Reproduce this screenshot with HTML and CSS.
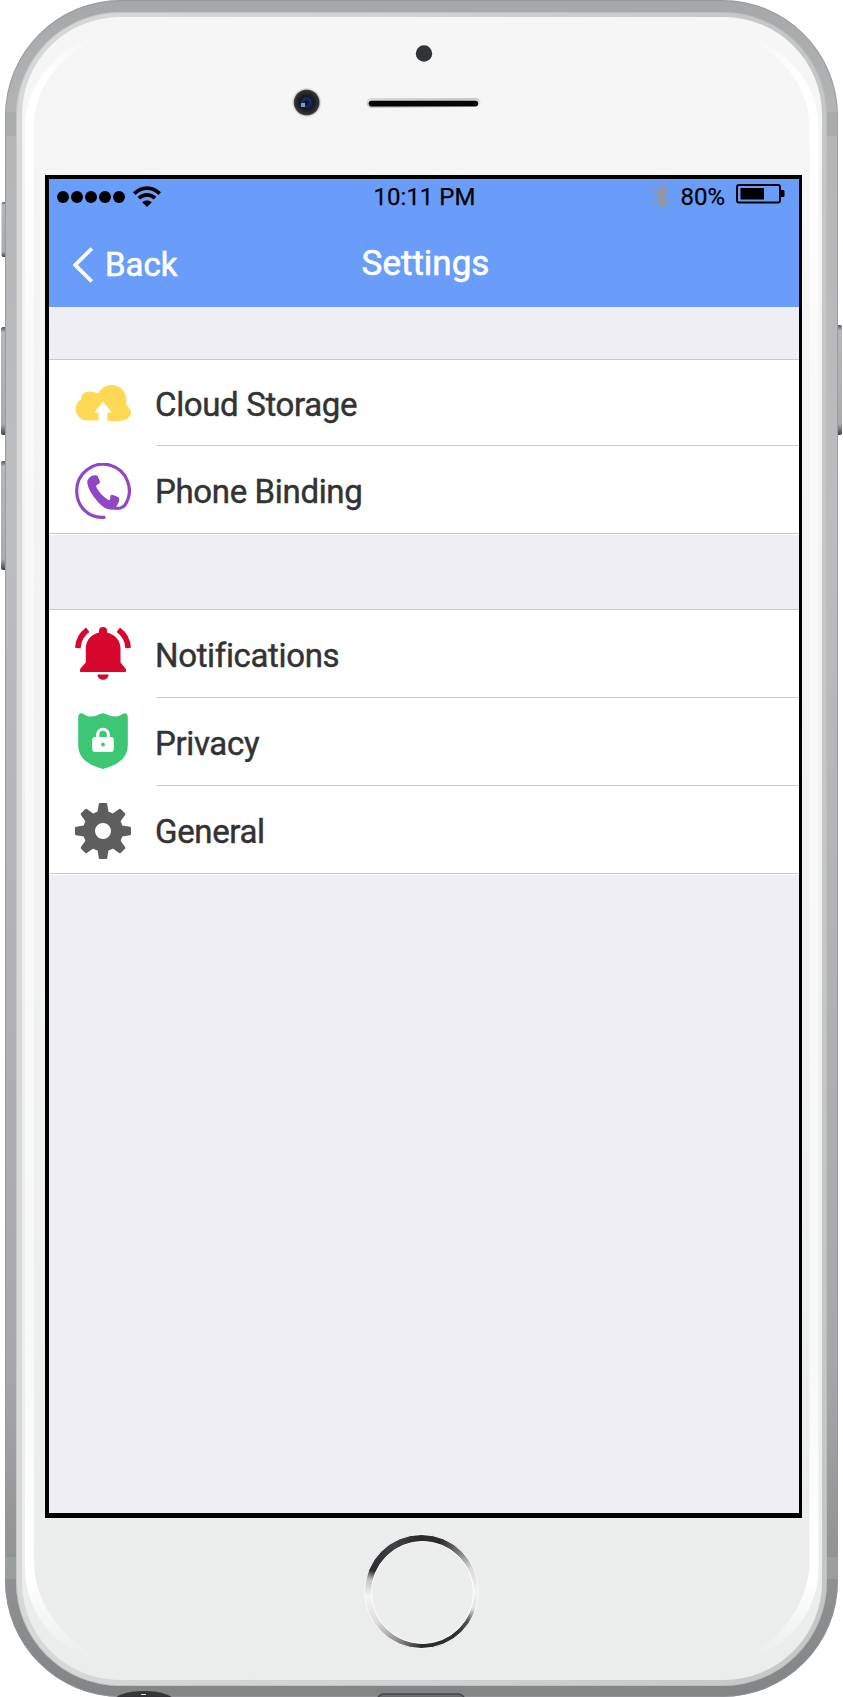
FILE: index.html
```html
<!DOCTYPE html>
<html lang="en">
<head>
<meta charset="utf-8">
<title>Settings</title>
<link rel="stylesheet" href="styles.css">
</head>
<body>
<div class="phone">
  <svg class="shell" viewBox="0 0 843 1697" width="843" height="1697" aria-hidden="true">
    <defs>
      <linearGradient id="metal" x1="0" y1="0" x2="0" y2="1">
        <stop offset="0" stop-color="#a5a7a9"/><stop offset=".07" stop-color="#b3b5b7"/><stop offset=".3" stop-color="#bbbdc0"/><stop offset=".8" stop-color="#a6a8ab"/><stop offset="1" stop-color="#828486"/>
      </linearGradient>
      <linearGradient id="rim" x1="0" y1="0" x2="1" y2="0">
        <stop offset="0" stop-color="#d6d9d7"/><stop offset=".5" stop-color="#cfd1d0"/><stop offset="1" stop-color="#c5c7c6"/>
      </linearGradient>
      <linearGradient id="face" x1="0" y1="0" x2="0" y2="1">
        <stop offset="0" stop-color="#f6f6f6"/><stop offset=".5" stop-color="#f1f1f1"/><stop offset="1" stop-color="#eaedec"/>
      </linearGradient>
      <linearGradient id="gloss" x1="0" y1="0" x2="0" y2="1">
        <stop offset="0" stop-color="#fff" stop-opacity="0"/><stop offset=".03" stop-color="#fff"/><stop offset=".14" stop-color="#fff" stop-opacity=".75"/><stop offset=".2" stop-color="#fff" stop-opacity=".5"/><stop offset=".8" stop-color="#fff" stop-opacity=".6"/><stop offset=".95" stop-color="#fff"/><stop offset="1" stop-color="#fff" stop-opacity="0"/>
      </linearGradient>
      <linearGradient id="key" x1="0" y1="0" x2="0" y2="1">
        <stop offset="0" stop-color="#55585b"/><stop offset=".05" stop-color="#b4b6b8"/><stop offset=".9" stop-color="#a9abad"/><stop offset="1" stop-color="#3f4144"/>
      </linearGradient>
      <radialGradient id="lens"><stop offset="0" stop-color="#070a16"/><stop offset=".3" stop-color="#183064"/><stop offset=".48" stop-color="#111a35"/><stop offset=".55" stop-color="#1c1c1e"/><stop offset=".9" stop-color="#303133"/><stop offset="1" stop-color="#59595b"/></radialGradient>
      <linearGradient id="slot" x1="0" y1="0" x2="1" y2="1"><stop offset="0" stop-color="#ddd"/><stop offset=".5" stop-color="#c8c8c8"/><stop offset="1" stop-color="#fff"/></linearGradient>
      <clipPath id="body"><rect x="5" y="0" width="833" height="1697" rx="116"/></clipPath>
    </defs>
    <rect x="1.500" y="202" width="8" height="55" rx="2" fill="url(#key)"/>
    <rect x="1" y="327" width="8" height="108" rx="2" fill="url(#key)"/>
    <rect x="1" y="461" width="8" height="109" rx="2" fill="url(#key)"/>
    <rect x="834" y="325" width="8" height="110" rx="2" fill="url(#key)"/>
    <rect x="5" y="0" width="833" height="1697" rx="116" fill="url(#metal)"/>
    <g clip-path="url(#body)">
      <rect x="5.500" y=".5" width="832" height="1696" rx="115.500" fill="none" stroke="#94969a" stroke-opacity=".8"/>
      <g fill="#a4a7a5" fill-opacity=".6"><path d="M5 112h11v24H5zM827 112h11v24h-11zM5 1557h11v22H5zM827 1557h11v22h-11z"/></g>
      <ellipse cx="144" cy="1702" rx="31" ry="11" fill="#353537"/>
      <path d="M141 1694.500h5" stroke="#ddd" stroke-width="1"/>
      <rect x="377" y="1694" width="88" height="20" rx="7" fill="#6b6e70" stroke="#454749" stroke-width="1.500"/>
    </g>
    <rect x="16" y="12" width="811" height="1674" rx="104" fill="url(#rim)"/>
    <rect x="16.500" y="12.500" width="810" height="1673" rx="103.500" fill="none" stroke="#b3b5b5" stroke-opacity=".5"/>
    <rect x="22" y="17" width="800" height="1663" rx="98" fill="url(#face)"/>
    <path id="shine" d="M114 30C60 42 25 82 25 127V1568C25 1615 60 1654 104 1660C60 1640 34 1600 34 1562V126C34 84 66 48 114 30Z" fill="url(#gloss)"/>
    <use href="#shine" transform="translate(843.500) scale(-1 1)"/>
    <circle cx="424" cy="53.500" r="8.200" fill="#323335"/>
    <circle cx="306.700" cy="102.500" r="14.500" fill="#dedede"/>
    <circle cx="306.700" cy="102.500" r="13" fill="url(#lens)"/>
    <rect x="301" y="103" width="4" height="4" fill="#8595be"/>
    <rect x="366.500" y="98" width="114" height="10" rx="5" fill="url(#slot)"/>
    <rect x="368.700" y="100.800" width="109.500" height="5.600" rx="2.800" fill="#050505"/>
  </svg>

  <main class="screen">
    <header class="top">
      <div class="status">
        <div class="status-left">
          <span class="dots"><i></i><i></i><i></i><i></i><i></i></span>
          <svg class="wifi" viewBox="0 0 28 21" width="28" height="21">
            <g fill="none" stroke="#000" stroke-width="3.700"><path d="M1.300 7.600C8.700.3 19.300.3 26.700 7.600"/><path d="M5.900 12.200C10.700 7.700 17.300 7.700 22.100 12.200"/></g>
            <path d="M9.200 16.300C12 14 16 14 18.800 16.300L14 21Z"/>
          </svg>
        </div>
        <time class="clock">10:11 PM</time>
        <div class="status-right">
          <svg class="bluetooth" viewBox="0 0 18 25" width="18" height="25"><path d="M1.500 5.500L15.200 17.800L9.500 22.800V2L15.200 7L1.500 19.300" fill="none" stroke="#989898" stroke-width="2.600"/></svg>
          <span class="charge">80%</span>
          <svg class="battery" viewBox="0 0 49 20" width="49" height="20">
            <rect x="1" y="1" width="43" height="17.500" rx="2" fill="none" stroke="#000" stroke-width="2"/>
            <rect x="4.500" y="4" width="23.500" height="11.500"/><path d="M44 6h3q1.500 0 1.500 1.500v4q0 1.500-1.500 1.500h-3z"/>
          </svg>
        </div>
      </div>
      <nav class="nav">
        <a class="back"><svg viewBox="0 0 21 36" width="21" height="36"><path d="M18.800 1.500L2.300 18L18.800 34.500" fill="none" stroke="#fff" stroke-width="3.800"/></svg><span>Back</span></a>
        <h1 class="title">Settings</h1>
      </nav>
    </header>

    <ul class="group">
      <li class="row">
        <svg class="icon" viewBox="0 0 56 56"><path fill="#ffd955" d="M11.500 45.500A11.500 11.500 0 0 1 6 24.300C6 17 14 14 23 18.500A15 15 0 0 1 51.200 28C51 30 52 31 53 32C60 38 54 46 45 46H33.500Q32.500 46 32.500 45V37.500H36.800L28 26.500L19.200 37.500H23.500V45.500Z"/></svg>
        <span class="label">Cloud Storage</span>
      </li>
      <li class="row">
        <svg class="icon low" viewBox="0 0 56 56"><path d="M29 54.300C13 55.500 1.700 43 1.700 28A26.300 26.300 0 1 1 50 42C47 45.500 43 46 38 45" fill="none" stroke="#9146c4" stroke-width="3.200" stroke-linecap="round"/><path fill="#9146c4" d="M15.700 13.600Q18 12 21 12.200Q22.500 12.300 23 13.800L24.800 18.200Q25.500 20.700 23 21.200Q20.500 22 21.500 24.500Q25.500 32 33 36.800Q35 37.800 35.200 35.500Q35 31 38 32L43 34Q44.600 35 44.200 37Q43 43.500 38 46.200Q31 48 23 39Q14 29 12.300 20.500Q12 16 15.700 13.600Z"/></svg>
        <span class="label">Phone Binding</span>
      </li>
    </ul>

    <ul class="group">
      <li class="row">
        <svg class="icon high" viewBox="0 0 56 56"><g fill="#d6062d"><path d="M24 7.500V6Q24 2 28 2T32 6V7.500C40 9.500 45.500 15 45.500 24V37.500L50.500 43.500Q52 47 50 47H6Q4 47 5.500 43.500L10.800 37.500V24C10.800 15 16 9.500 24 7.500Z"/><path d="M22.500 49.500H33.500C33.500 56.500 22.500 56.500 22.500 49.500Z"/></g><path d="M12.700 4.800Q3.500 11.500 2.800 23M43.300 4.800Q52.500 11.500 53.200 23" fill="none" stroke="#d6062d" stroke-width="5.600"/></svg>
        <span class="label">Notifications</span>
      </li>
      <li class="row">
        <svg class="icon high" viewBox="0 0 56 56"><path fill="#3dc775" d="M5.500.3C8.500-.5 10 3.500 16 3.500S25 .3 28 .3S34 3.500 40 3.500S47.500-.5 50.500.3Q52.800 1 52.800 4V32C52.800 45 43 52 28 56C13 52 3.200 45 3.200 32V4Q3.200 1 5.500.3Z"/><rect x="17.200" y="24" width="21.600" height="15" rx="3" fill="#fff"/><path d="M22.700 26V21.500a5.300 5.300 0 0 1 10.600 0V26" fill="none" stroke="#fff" stroke-width="3"/><circle cx="28" cy="31.500" r="1.900" fill="#3dc775"/></svg>
        <span class="label">Privacy</span>
      </li>
      <li class="row">
        <svg class="icon low" viewBox="0 0 56 56"><defs><path id="tooth" d="M23.800 1Q24 0 25 0H31Q32 0 32.200 1L34 12H22Z"/></defs><g fill="#5e5e5e"><use href="#tooth"/><use href="#tooth" transform="rotate(45 28 28)"/><use href="#tooth" transform="rotate(90 28 28)"/><use href="#tooth" transform="rotate(135 28 28)"/><use href="#tooth" transform="rotate(180 28 28)"/><use href="#tooth" transform="rotate(225 28 28)"/><use href="#tooth" transform="rotate(270 28 28)"/><use href="#tooth" transform="rotate(315 28 28)"/></g><circle cx="28" cy="28" r="14" fill="none" stroke="#5e5e5e" stroke-width="12"/></svg>
        <span class="label">General</span>
      </li>
    </ul>
  </main>

  <div class="home"><span class="home-ring"></span></div>
</div>
</body>
</html>
```

FILE: styles.css
```css
* { box-sizing: border-box; }
body { margin: 0; background: #fff; font-family: Roboto, "Liberation Sans", sans-serif; color: #333; }
.phone { position: relative; width: 843px; height: 1697px; padding: 175px 41px 0 45px; overflow: hidden; }
.shell { position: absolute; left: 0; top: 0; z-index: -1; }

.screen { height: 1343px; border: solid #000; border-width: 4px 3px 5px 4px; background: #efeef4; }
.top { height: 128px; background: #6a9df9; color: #fff; }
.status { display: grid; grid-template-columns: 1fr auto 1fr; height: 37px; padding: 0 14px 0 8px; color: #000; font-size: 24px; line-height: 36px; -webkit-text-stroke: .25px #000; }
.status-left { display: flex; align-items: flex-start; gap: 8px; padding-top: 7px; }
.dots { display: flex; gap: 2px; padding-top: 5px; }
.dots i { width: 12px; height: 12px; border-radius: 50%; background: #000; }
.clock { padding-left: 7px; }
.status-right { display: flex; justify-content: flex-end; align-items: flex-start; }
.bluetooth { margin: 5px 10px 0 0; }
.charge { margin-right: 11px; }
.battery { margin-top: 5px; }
.nav { display: grid; grid-template-columns: 1fr auto 1fr; align-items: center; height: 96px; -webkit-text-stroke: .6px #fff; }
.back { display: flex; align-items: center; gap: 11px; padding: 1px 0 0 24px; font-size: 33px; line-height: 36px; }
.title { margin: 0; padding: 0 0 1px 3px; font-size: 35px; font-weight: 400; line-height: 36px; }

.group { margin: 52px 0 0; padding: 0; list-style: none; background: #fff; border-top: 1px solid #c8c7cc; border-bottom: 1px solid #c8c7cc; box-shadow: 0 1px #fff; }
.group + .group { margin-top: 75px; }
.row { display: grid; grid-template-columns: 56px 1fr; column-gap: 26px; height: 88px; padding-left: 26px; align-items: center; }
.group:first-of-type .row:first-child { height: 86px; }
.row:last-child { height: 87px; }
.icon { width: 56px; height: 56px; }
.low { margin-top: 2px; }
.high { margin-bottom: 3px; }
.label { display: flex; align-items: center; height: 100%; padding-top: 4px; font-size: 33px; letter-spacing: -.35px; text-indent: -2px; border-bottom: 1px solid #c8c7cc; -webkit-text-stroke: .45px #333; }
.row:last-child .label { border-bottom: 0; }

.home { display: flex; justify-content: center; padding: 16px 4px 0 0; }
.home-ring { width: 115px; height: 115px; padding: 6px; border: 1px solid #f9f9f9; border-radius: 50%; background: conic-gradient(#2d2d2f, #2c2c2e 20deg, #777 43deg, #d9d9db 65deg, #f4f4f6 90deg, #e2e2e5 108deg, #55565c 122deg, #303134 140deg, #2b2b2d 180deg, #8b8b8d 205deg, #ddd 235deg, #f5f5f6 265deg, #c4c4c7 283deg, #2d2d30 293deg, #414247 330deg, #2b2b2d 358deg); }
.home-ring::before { content: ""; display: block; width: 101px; height: 101px; border: 1px solid #fff; border-radius: 50%; background: #ebeeed; }
```
